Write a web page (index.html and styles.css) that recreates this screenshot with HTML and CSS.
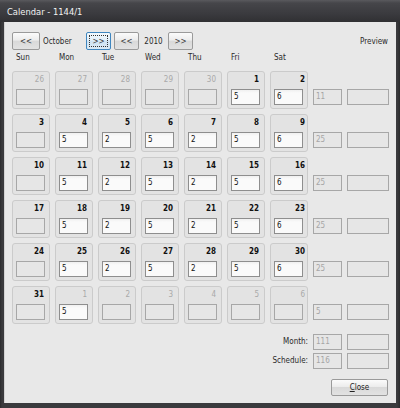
FILE: index.html
```html
<!DOCTYPE html>
<html>
<head>
<meta charset="utf-8">
<link rel="stylesheet" href="styles.css">
</head>
<body>
<div class="window">
  <div class="titlebar">Calendar - 1144/1</div>
  <div class="client">
    <div class="nav">
      <div class="btn wide">&lt;&lt;</div>
      <div class="nav-month">October</div>
      <div class="btn focused"><span class="focus">&gt;&gt;</span></div>
      <div class="btn gap">&lt;&lt;</div>
      <div class="nav-year">2010</div>
      <div class="btn">&gt;&gt;</div>
      <div class="preview">Preview</div>
    </div>
    <div class="grid heads">
      <div class="head">Sun</div><div class="head">Mon</div><div class="head">Tue</div><div class="head">Wed</div><div class="head">Thu</div><div class="head">Fri</div><div class="head">Sat</div>
    </div>
    <div class="rows">
      <div class="grid row">
        <div class="cell other"><div class="num">26</div><div class="field"></div></div>
        <div class="cell other"><div class="num">27</div><div class="field"></div></div>
        <div class="cell other"><div class="num">28</div><div class="field"></div></div>
        <div class="cell other"><div class="num">29</div><div class="field"></div></div>
        <div class="cell other"><div class="num">30</div><div class="field"></div></div>
        <div class="cell"><div class="num">1</div><div class="field on">5</div></div>
        <div class="cell sat"><div class="num">2</div><div class="field on">6</div></div>
        <div class="field extra">11</div>
        <div class="field extra"></div>
      </div>
      <div class="grid row">
        <div class="cell"><div class="num">3</div><div class="field"></div></div>
        <div class="cell"><div class="num">4</div><div class="field on">5</div></div>
        <div class="cell"><div class="num">5</div><div class="field on">2</div></div>
        <div class="cell"><div class="num">6</div><div class="field on">5</div></div>
        <div class="cell"><div class="num">7</div><div class="field on">2</div></div>
        <div class="cell"><div class="num">8</div><div class="field on">5</div></div>
        <div class="cell sat"><div class="num">9</div><div class="field on">6</div></div>
        <div class="field extra">25</div>
        <div class="field extra"></div>
      </div>
      <div class="grid row">
        <div class="cell"><div class="num">10</div><div class="field"></div></div>
        <div class="cell"><div class="num">11</div><div class="field on">5</div></div>
        <div class="cell"><div class="num">12</div><div class="field on">2</div></div>
        <div class="cell"><div class="num">13</div><div class="field on">5</div></div>
        <div class="cell"><div class="num">14</div><div class="field on">2</div></div>
        <div class="cell"><div class="num">15</div><div class="field on">5</div></div>
        <div class="cell sat"><div class="num">16</div><div class="field on">6</div></div>
        <div class="field extra">25</div>
        <div class="field extra"></div>
      </div>
      <div class="grid row">
        <div class="cell"><div class="num">17</div><div class="field"></div></div>
        <div class="cell"><div class="num">18</div><div class="field on">5</div></div>
        <div class="cell"><div class="num">19</div><div class="field on">2</div></div>
        <div class="cell"><div class="num">20</div><div class="field on">5</div></div>
        <div class="cell"><div class="num">21</div><div class="field on">2</div></div>
        <div class="cell"><div class="num">22</div><div class="field on">5</div></div>
        <div class="cell sat"><div class="num">23</div><div class="field on">6</div></div>
        <div class="field extra">25</div>
        <div class="field extra"></div>
      </div>
      <div class="grid row">
        <div class="cell"><div class="num">24</div><div class="field"></div></div>
        <div class="cell"><div class="num">25</div><div class="field on">5</div></div>
        <div class="cell"><div class="num">26</div><div class="field on">2</div></div>
        <div class="cell"><div class="num">27</div><div class="field on">5</div></div>
        <div class="cell"><div class="num">28</div><div class="field on">2</div></div>
        <div class="cell"><div class="num">29</div><div class="field on">5</div></div>
        <div class="cell sat"><div class="num">30</div><div class="field on">6</div></div>
        <div class="field extra">25</div>
        <div class="field extra"></div>
      </div>
      <div class="grid row">
        <div class="cell"><div class="num">31</div><div class="field"></div></div>
        <div class="cell other"><div class="num">1</div><div class="field on">5</div></div>
        <div class="cell other"><div class="num">2</div><div class="field"></div></div>
        <div class="cell other"><div class="num">3</div><div class="field"></div></div>
        <div class="cell other"><div class="num">4</div><div class="field"></div></div>
        <div class="cell other"><div class="num">5</div><div class="field"></div></div>
        <div class="cell other sat"><div class="num">6</div><div class="field"></div></div>
        <div class="field extra">5</div>
        <div class="field extra"></div>
      </div>
    </div>
    <div class="grid totals">
      <div class="tlabel">Month:</div>
      <div class="field tfield">111</div>
      <div class="field tfield"></div>
      <div class="tlabel">Schedule:</div>
      <div class="field tfield">116</div>
      <div class="field tfield"></div>
    </div>
    <div class="footer">
      <div class="btn close"><span><u>C</u>lose</span></div>
    </div>
  </div>
</div>
</body>
</html>
```
FILE: styles.css
```css
* { box-sizing: border-box; }
html, body { margin: 0; padding: 0; }
body {
  width: 400px;
  height: 408px;
  overflow: hidden;
  background: #2e2e30;
  font-family: "DejaVu Sans Condensed", "DejaVu Sans", sans-serif;
  font-stretch: condensed;
  font-size: 8px;
  color: #1c1c1c;
}
.window {
  width: 400px;
  height: 408px;
  display: flex;
  flex-direction: column;
  background: linear-gradient(90deg, #2b2b2d, #3a3a3d 2px, #3a3a3d 397px, #2b2b2d);
}
.titlebar {
  height: 22px;
  flex: none;
  padding: 1px 0 0 7px;
  line-height: 21px;
  font-size: 9.3px;
  color: #f2f2f2;
  background: linear-gradient(#5a5a5e, #46464a 3px, #3a3a3e 14px, #303033);
}
.client {
  flex: 1;
  margin: 0 4px 5px 4px;
  background: #e8e8e8;
  box-shadow: inset 1px 0 0 #d2d2d2;
  padding: 10px 8px 0 8px;
  display: flex;
  flex-direction: column;
}
.nav {
  display: flex;
  align-items: center;
  height: 18px;
}
.btn {
  width: 25px;
  height: 18px;
  border: 1px solid #9a9a9a;
  border-radius: 2px;
  background: linear-gradient(#fbfbfb, #ececec 45%, #d9d9d9 50%, #e2e2e2);
  color: #3a3a3a;
  display: flex;
  align-items: center;
  justify-content: center;
  font-size: 8px;
  flex: none;
}
.btn.wide { width: 28px; }
.btn.gap { margin-left: 3px; }
.btn.focused {
  border-color: #3f86bf;
  background: linear-gradient(#f3f9fd, #e3eff8 45%, #cfe3f2 50%, #dbeaf5);
  padding: 2px;
}
.focus {
  width: 100%;
  height: 100%;
  border: 1px dotted #333;
  display: flex;
  align-items: center;
  justify-content: center;
}
.nav-month { width: 46px; padding-left: 3px; color: #2a2a2a; }
.nav-year { width: 29px; text-align: center; color: #2a2a2a; }
.preview { margin-left: auto; color: #2a2a2a; }
.grid {
  display: grid;
  grid-template-columns: repeat(7, 38px) 29px 42px;
  column-gap: 5px;
}
.heads {
  margin-top: 1px;
  height: 14px;
  line-height: 14px;
}
.head { padding-left: 4px; color: #2a2a2a; }
.rows {
  margin-top: 6px;
  display: flex;
  flex-direction: column;
  gap: 5px;
}
.row { height: 38px; }
.cell {
  border: 1px solid #cbcbcb;
  border-radius: 3px;
  background: #e3e3e3;
  display: flex;
  flex-direction: column;
}
.num {
  height: 17px;
  padding: 1px 5px 0 0;
  line-height: 14px;
  text-align: right;
  font-weight: bold;
  color: #111;
}
.cell.sat .num { padding-right: 2px; }
.cell.other .num { font-weight: normal; color: #a9a9a9; }
.field {
  width: 29px;
  height: 16px;
  margin-left: 3px;
  border: 1px solid #a7a7a7;
  background: #e6e6e6;
  padding-left: 2px;
  line-height: 14px;
  color: #a5a5a5;
}
.field.on {
  border-color: #8e8e8e;
  background: linear-gradient(#f0f0f0, #fafafa 3px);
  color: #111;
}
.field.extra {
  margin: 0 0 4px 0;
  align-self: end;
  width: auto;
}
.totals {
  margin-top: 10px;
  row-gap: 3px;
}
.tlabel {
  grid-column: 1 / 8;
  text-align: right;
  line-height: 16px;
  color: #2a2a2a;
}
.field.tfield {
  margin: 0;
  width: auto;
}
.footer {
  margin-top: 10px;
  display: flex;
  justify-content: flex-end;
}
.btn.close {
  width: 57px;
  height: 17px;
  color: #222;
}
u { text-decoration: underline; }
```
